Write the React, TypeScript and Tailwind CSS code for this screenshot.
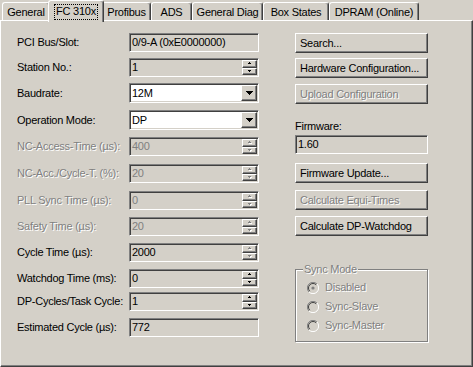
import React from 'react';

// classic 3D edges
const sunken =
  'border border-t-[#808080] border-l-[#808080] border-r-white border-b-white shadow-[inset_1px_1px_0_#404040,inset_-1px_-1px_0_#d4d0c8]';
const raised =
  'border border-t-white border-l-white border-r-[#404040] border-b-[#404040] shadow-[inset_-1px_-1px_0_#808080]';
const dis = 'text-[#808080] [text-shadow:1px_1px_0_#ffffff]';

const SpinArrow = ({ up, off }: { up?: boolean; off?: boolean }) => (
  <svg width="4" height="3" viewBox="0 0 4 3" className="block" shapeRendering="crispEdges">
    {off && (
      <g fill="#ffffff" transform="translate(1,1)">
        {up ? <><rect x="1" y="0" width="1" height="1" /><rect x="0" y="1" width="3" height="1" /></> : <><rect x="0" y="0" width="3" height="1" /><rect x="1" y="1" width="1" height="1" /></>}
      </g>
    )}
    <g fill={off ? '#808080' : '#000000'}>
      {up ? <><rect x="1" y="0" width="1" height="1" /><rect x="0" y="1" width="3" height="1" /></> : <><rect x="0" y="0" width="3" height="1" /><rect x="1" y="1" width="1" height="1" /></>}
    </g>
  </svg>
);

const Spinner = ({ off }: { off?: boolean }) => (
  <div className="flex flex-col w-[15px] h-full py-[1px] mr-[1px]">
    <div className={`flex-1 flex items-center justify-center bg-[#d4d0c8] ${raised}`}>
      <SpinArrow up off={off} />
    </div>
    <div className={`flex-1 flex items-center justify-center bg-[#d4d0c8] ${raised}`}>
      <SpinArrow off={off} />
    </div>
  </div>
);

const ComboButton = () => (
  <div className={`w-[16px] h-[16px] my-[1px] mr-[1px] flex items-center justify-center bg-[#d4d0c8] ${raised}`}>
    <svg width="7" height="4" viewBox="0 0 7 4" shapeRendering="crispEdges">
      <rect x="0" y="0" width="7" height="1" fill="#000" />
      <rect x="1" y="1" width="5" height="1" fill="#000" />
      <rect x="2" y="2" width="3" height="1" fill="#000" />
      <rect x="3" y="3" width="1" height="1" fill="#000" />
    </svg>
  </div>
);

type Row = {
  label: string;
  value: string;
  kind: 'ro' | 'spin' | 'combo';
  off?: boolean;
  arrowsOff?: boolean;
  mt: string;
};

const rows: Row[] = [
  { label: 'PCI Bus/Slot:', value: '0/9-A (0xE0000000)', kind: 'ro', mt: 'mt-[12px]' },
  { label: 'Station No.:', value: '1', kind: 'spin', mt: 'mt-[6px]' },
  { label: 'Baudrate:', value: '12M', kind: 'combo', mt: 'mt-[6px]' },
  { label: 'Operation Mode:', value: 'DP', kind: 'combo', mt: 'mt-[7px]' },
  { label: 'NC-Access-Time (µs):', value: '400', kind: 'spin', off: true, arrowsOff: true, mt: 'mt-[7px]' },
  { label: 'NC-Acc./Cycle-T. (%):', value: '20', kind: 'spin', off: true, arrowsOff: true, mt: 'mt-[8px]' },
  { label: 'PLL Sync Time (µs):', value: '0', kind: 'spin', off: true, arrowsOff: true, mt: 'mt-[8px]' },
  { label: 'Safety Time (µs):', value: '20', kind: 'spin', off: true, arrowsOff: true, mt: 'mt-[7px]' },
  { label: 'Cycle Time (µs):', value: '2000', kind: 'spin', arrowsOff: true, mt: 'mt-[7px]' },
  { label: 'Watchdog Time (ms):', value: '0', kind: 'spin', mt: 'mt-[7px]' },
  { label: 'DP-Cycles/Task Cycle:', value: '1', kind: 'spin', mt: 'mt-[4px]' },
  { label: 'Estimated Cycle (µs):', value: '772', kind: 'ro', mt: 'mt-[7px]' },
];

const tabs = [
  { name: 'General', w: 'w-[48px]' },
  { name: 'FC 310x', w: 'w-[56px]', active: true },
  { name: 'Profibus', w: 'w-[49px]' },
  { name: 'ADS', w: 'w-[41px]' },
  { name: 'General Diag', w: 'w-[71px]' },
  { name: 'Box States', w: 'w-[66px]' },
  { name: 'DPRAM (Online)', w: 'w-[90px]' },
];

const Button = ({ label, off }: { label: string; off?: boolean }) => (
  <div className={`h-[20px] flex items-center pl-[4px] bg-[#d4d0c8] ${raised}`}>
    <span className={off ? dis : 'text-black'}>{label}</span>
  </div>
);

const Radio = ({ label, checked }: { label: string; checked?: boolean }) => (
  <div className="flex items-center h-[19px] pl-[11px]">
    <svg width="12" height="12" viewBox="0 0 12 12" className="shrink-0">
      <circle cx="6" cy="6" r="5.5" fill="#d4d0c8" />
      <path d="M10 2 A5.5 5.5 0 0 0 2 10" fill="none" stroke="#808080" strokeWidth="1" />
      <path d="M9.2 2.8 A4.5 4.5 0 0 0 2.8 9.2" fill="none" stroke="#404040" strokeWidth="1" />
      <path d="M2 10 A5.5 5.5 0 0 0 10 2" fill="none" stroke="#ffffff" strokeWidth="1" />
      {checked && <circle cx="6" cy="6" r="1.6" fill="#808080" />}
    </svg>
    <span className={`ml-[6px] ${dis}`}>{label}</span>
  </div>
);

export default function App() {
  return (
    <div className="w-[473px] h-[367px] bg-[#d4d0c8] text-[11px] tracking-[-0.25px] leading-none text-black font-['Liberation_Sans',Arial,sans-serif] select-none overflow-hidden">
      {/* Tab strip */}
      <div className="h-[20px] flex items-end pl-[2px]">
        {tabs.map((t) =>
          t.active ? (
            <div
              key={t.name}
              className={`${t.w} h-[22px] -mx-[2px] mb-[-2px] relative z-10 bg-[#d4d0c8] border-l border-t border-r border-l-white border-t-white border-r-[#404040] rounded-t-[3px] shadow-[inset_-1px_0_0_#808080] flex items-start justify-center pt-[3px]`}
            >
              <span className="border border-dotted border-black px-[1px] pt-[1px] pb-[2px]">{t.name}</span>
            </div>
          ) : (
            <div
              key={t.name}
              className={`${t.w} h-[18px] bg-[#d4d0c8] border-l border-t border-r border-l-white border-t-white border-r-[#404040] rounded-t-[3px] shadow-[inset_-1px_0_0_#808080] flex items-start justify-center pt-[4px]`}
            >
              {t.name}
            </div>
          )
        )}
      </div>

      {/* Page */}
      <div className="h-[347px] border-l border-t border-r border-b border-l-white border-t-white border-r-[#404040] border-b-[#404040] shadow-[inset_-1px_-1px_0_#808080] flex">
        {/* Left column */}
        <div className="flex flex-col pl-[16px] w-[259px]">
          {rows.map((r) => (
            <div key={r.label} className={`flex items-center ${r.mt} ${r.kind === 'combo' ? 'h-[20px]' : 'h-[19px]'}`}>
              <div className={`w-[112px] shrink-0 ${r.off ? dis : ''}`}>{r.label}</div>
              <div
                className={`w-[130px] h-full flex items-center ${sunken} ${r.kind === 'combo' ? 'bg-white' : 'bg-[#d4d0c8]'}`}
              >
                <span className={`flex-1 pl-[2px] ${r.off ? 'text-[#808080]' : 'text-black'}`}>{r.value}</span>
                {r.kind === 'spin' && <Spinner off={r.arrowsOff} />}
                {r.kind === 'combo' && <ComboButton />}
              </div>
            </div>
          ))}
        </div>

        {/* Right column */}
        <div className="flex flex-col w-[133px] ml-[35px] pt-[12px]">
          <Button label="Search..." />
          <div className="mt-[5px]">
            <Button label="Hardware Configuration..." />
          </div>
          <div className="mt-[6px]">
            <Button label="Upload Configuration" off />
          </div>
          <div className="mt-[17px] h-[12px]">Firmware:</div>
          <div className={`mt-[2px] h-[19px] flex items-center pl-[2px] bg-[#d4d0c8] ${sunken}`}>1.60</div>
          <div className="mt-[9px]">
            <Button label="Firmware Update..." />
          </div>
          <div className="mt-[7px]">
            <Button label="Calculate Equi-Times" off />
          </div>
          <div className="mt-[6px]">
            <Button label="Calculate DP-Watchdog" />
          </div>

          {/* Sync Mode group */}
          <div className="relative mt-[33px] h-[73px] border border-[#808080] shadow-[1px_1px_0_#ffffff,inset_1px_1px_0_#ffffff] pt-[8px]">
            <span className={`absolute -top-[6px] left-[7px] px-[1px] bg-[#d4d0c8] ${dis}`}>Sync Mode</span>
            <Radio label="Disabled" checked />
            <Radio label="Sync-Slave" />
            <Radio label="Sync-Master" />
          </div>
        </div>
      </div>
    </div>
  );
}
